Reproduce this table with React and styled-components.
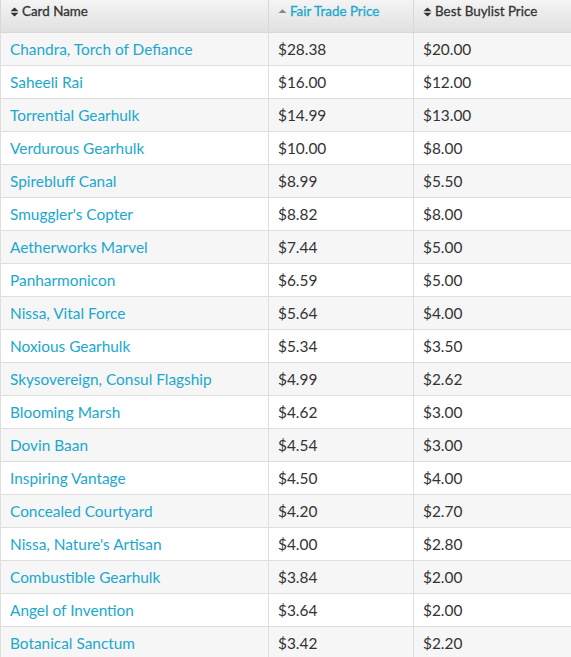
import React from "react";
import styled, { createGlobalStyle } from "styled-components";

const Global = createGlobalStyle`
  html, body { margin: 0; padding: 0; background: #fff; }
  body { font-family: Lato, "Open Sans", sans-serif; }
`;

const rows = [
  ["Chandra, Torch of Defiance", "$28.38", "$20.00"],
  ["Saheeli Rai", "$16.00", "$12.00"],
  ["Torrential Gearhulk", "$14.99", "$13.00"],
  ["Verdurous Gearhulk", "$10.00", "$8.00"],
  ["Spirebluff Canal", "$8.99", "$5.50"],
  ["Smuggler's Copter", "$8.82", "$8.00"],
  ["Aetherworks Marvel", "$7.44", "$5.00"],
  ["Panharmonicon", "$6.59", "$5.00"],
  ["Nissa, Vital Force", "$5.64", "$4.00"],
  ["Noxious Gearhulk", "$5.34", "$3.50"],
  ["Skysovereign, Consul Flagship", "$4.99", "$2.62"],
  ["Blooming Marsh", "$4.62", "$3.00"],
  ["Dovin Baan", "$4.54", "$3.00"],
  ["Inspiring Vantage", "$4.50", "$4.00"],
  ["Concealed Courtyard", "$4.20", "$2.70"],
  ["Nissa, Nature's Artisan", "$4.00", "$2.80"],
  ["Combustible Gearhulk", "$3.84", "$2.00"],
  ["Angel of Invention", "$3.64", "$2.00"],
  ["Botanical Sanctum", "$3.42", "$2.20"],
];

const Table = styled.table`
  width: 571px;
  border-collapse: collapse;
  table-layout: fixed;
  font-family: Lato, "Open Sans", sans-serif;
`;

const HeadCell = styled.th`
  height: 32px;
  box-sizing: border-box;
  padding: 3px 9px 8px;
  text-align: left;
  vertical-align: top;
  font-size: 13.4px;
  font-weight: 400;
  -webkit-text-stroke: 0.3px currentColor;
  color: ${(p) => (p.$active ? "#1ba8cc" : "#333")};
  background: linear-gradient(#f4f4f4, #e0e0e0);
  border: 1px solid #d8d8d8;
  border-top: none;
  white-space: nowrap;
`;

const SortIcon = styled.svg`
  width: 9px;
  height: 10px;
  margin-right: 3px;
  vertical-align: -1px;
`;

const Row = styled.tr`
  background: ${(p) => (p.$striped ? "#f6f6f6" : "#fff")};
`;

const Cell = styled.td`
  height: 33px;
  box-sizing: border-box;
  padding: 0 9px;
  font-size: 15.4px;
  color: #333;
  border: 1px solid #dedede;
  white-space: nowrap;
`;

const CardLink = styled.a`
  color: #1ba8cc;
  text-decoration: none;
`;

const BothArrows = () => (
  <SortIcon viewBox="0 0 9 10">
    <path d="M0.5 4.2 L4.5 0.5 L8.5 4.2 Z M0.5 5.8 L4.5 9.5 L8.5 5.8 Z" fill="#333" />
  </SortIcon>
);

const UpArrow = () => (
  <SortIcon viewBox="0 0 9 10">
    <path d="M0.5 6 L4.5 2.2 L8.5 6 Z" fill="#888" />
  </SortIcon>
);

export default function App() {
  return (
    <>
      <Global />
      <Table>
        <colgroup>
          <col style={{ width: 268 }} />
          <col style={{ width: 145 }} />
          <col style={{ width: 158 }} />
        </colgroup>
        <thead>
          <tr>
            <HeadCell>
              <BothArrows />
              Card Name
            </HeadCell>
            <HeadCell $active>
              <UpArrow />
              Fair Trade Price
            </HeadCell>
            <HeadCell>
              <BothArrows />
              Best Buylist Price
            </HeadCell>
          </tr>
        </thead>
        <tbody>
          {rows.map((r, i) => (
            <Row key={r[0]} $striped={i % 2 === 0}>
              <Cell>
                <CardLink href="#">{r[0]}</CardLink>
              </Cell>
              <Cell>{r[1]}</Cell>
              <Cell>{r[2]}</Cell>
            </Row>
          ))}
        </tbody>
      </Table>
    </>
  );
}
